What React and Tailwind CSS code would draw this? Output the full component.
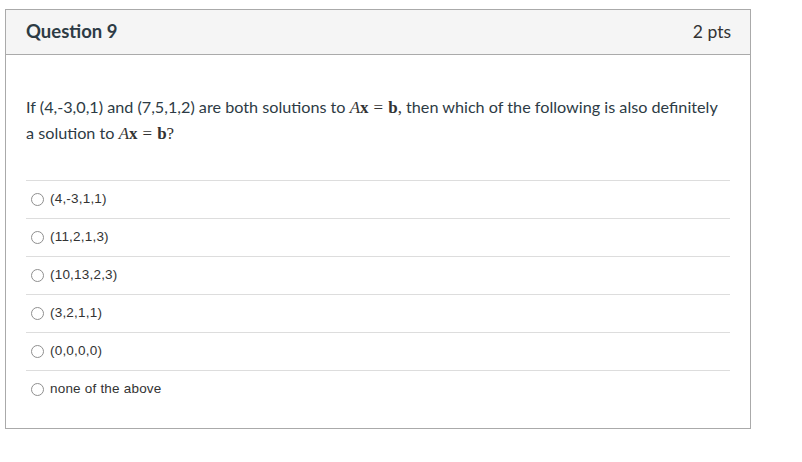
export default function App() {
  const options = ["(4,-3,1,1)", "(11,2,1,3)", "(10,13,2,3)", "(3,2,1,1)", "(0,0,0,0)", "none of the above"];
  const M = ({ end }) => (
    <span className="text-[17px] leading-[25px] text-[#333333]" style={{ fontFamily: '"Liberation Serif", "DejaVu Serif", serif' }}>
      <span className="italic">A</span>
      <span className="font-bold">x</span>
      <span className="mx-[5px]">=</span>
      <span className="font-bold">b</span>
      {end}
    </span>
  );
  return (
    <div className="w-[802px] h-[462px] bg-white pt-[9px] pl-[5px]">
      <div className="w-[746px] h-[420px] border border-[#aaaaaa] flex flex-col" style={{ fontFamily: 'Lato, "Liberation Sans", sans-serif' }}>
        <div className="h-[45px] bg-[#f5f5f5] border-b border-[#aaaaaa] flex items-center justify-between pl-[20px] pr-[19px]">
          <span className="text-[18.5px] font-bold text-[#2d3b45]">Question 9</span>
          <span className="text-[17.5px] text-[#333333]">2 pts</span>
        </div>
        <div className="px-[20px] pt-[39px]">
          <div className="text-[16.2px] leading-[25px] text-[#2d3b45]">
            <div className="whitespace-nowrap">
              <span>If (4,-3,0,1) and (7,5,1,2) are both solutions to </span>
              <M end="," />
              <span> then which of the following is also definitely</span>
            </div>
            <div className="whitespace-nowrap">
              <span>a solution to </span>
              <M end="?" />
            </div>
          </div>
          <div className="mt-[34px]">
            {options.map((o) => (
              <div key={o} className="h-[38px] border-t border-[#dddddd] flex items-center pl-[5px]" style={{ fontFamily: '"Liberation Sans", Arial, sans-serif' }}>
                <span className="w-[13px] h-[13px] rounded-full border border-[#8f8f8f] bg-white mr-[6px]" />
                <span className="text-[13.5px] tracking-[0.2px] text-[#333333]">{o}</span>
              </div>
            ))}
          </div>
        </div>
      </div>
    </div>
  );
}
